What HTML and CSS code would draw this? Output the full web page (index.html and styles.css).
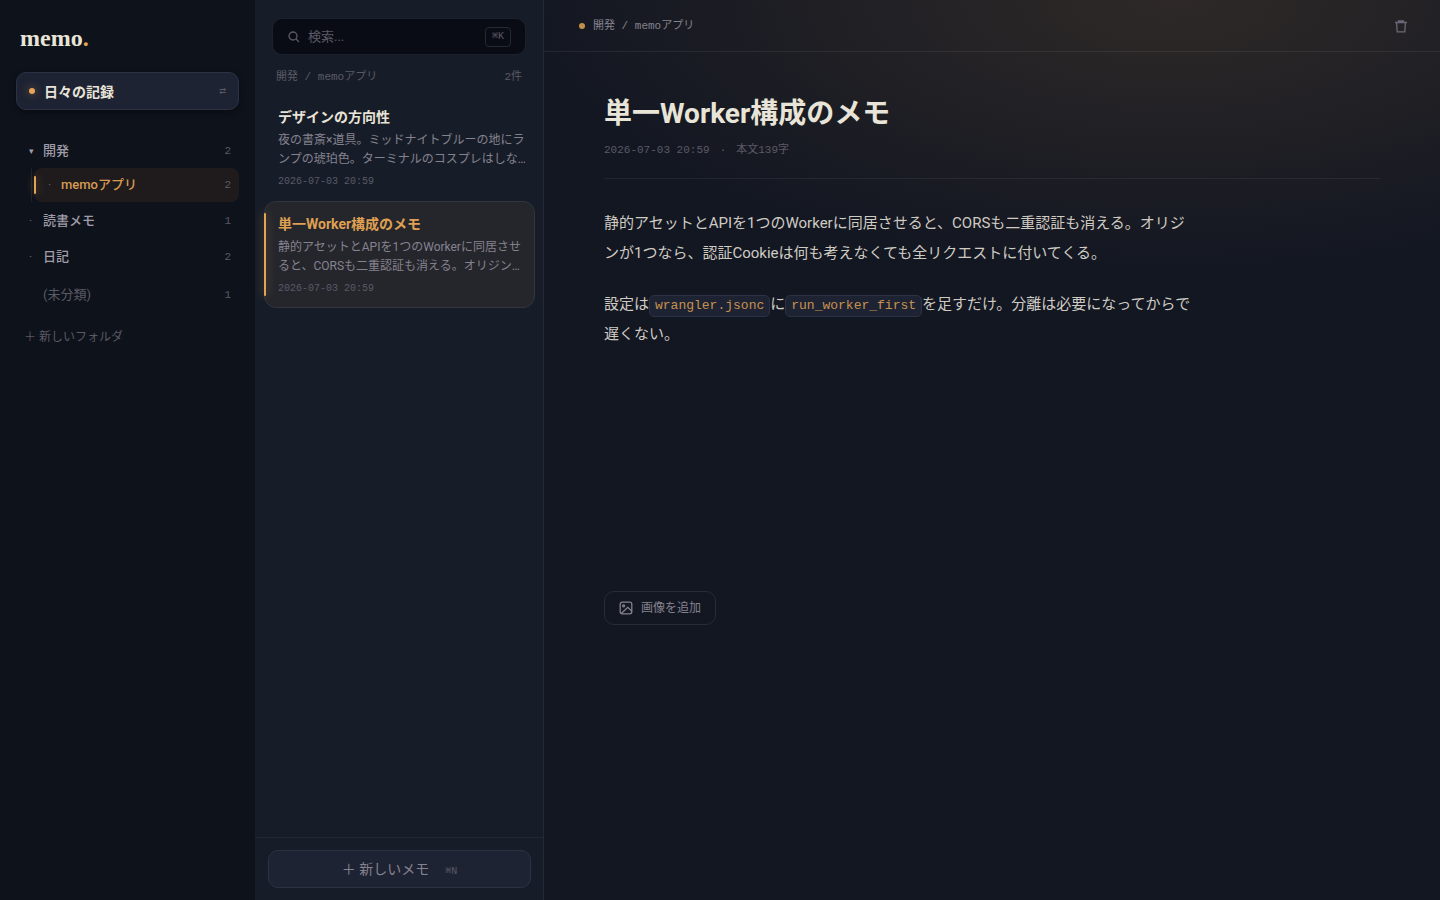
FILE: index.html
```html
<!DOCTYPE html>
<html lang="ja">
<head>
  <meta charset="UTF-8">
  <title>memo.</title>
  <meta name="viewport" content="width=device-width,initial-scale=1">
  <link rel="stylesheet" href="styles.css">
</head>
<body>
<div class="app">
  <nav class="side">
    <div class="logo">memo<span>.</span></div>
    <button class="space"><i class="lamp"></i><span class="name">日々の記録</span><span class="swap">⇄</span></button>
    <ul class="tree">
      <li><button class="folder"><span class="mark caret">▾</span><span class="name">開発</span><span class="num">2</span></button>
        <ul class="sub">
          <li><button class="folder active"><span class="mark">·</span><span class="name">memoアプリ</span><span class="num">2</span></button></li>
        </ul>
      </li>
      <li><button class="folder"><span class="mark">·</span><span class="name">読書メモ</span><span class="num">1</span></button></li>
      <li><button class="folder"><span class="mark">·</span><span class="name">日記</span><span class="num">2</span></button></li>
      <li><button class="folder none"><span class="mark"></span><span class="name">(未分類)</span><span class="num">1</span></button></li>
    </ul>
    <button class="new-folder">＋ 新しいフォルダ</button>
  </nav>

  <section class="list">
    <label class="search">
      <svg width="12" height="12" viewBox="0 0 12 12"><circle cx="5" cy="5" r="4"/><path d="M8 8l3 3"/></svg>
      <input type="text" placeholder="検索..." aria-label="検索">
      <kbd>⌘K</kbd>
    </label>
    <div class="list-head"><span>開発 / memoアプリ</span><span>2件</span></div>
    <div class="cards">
      <button class="card">
        <span class="card-title">デザインの方向性</span>
        <span class="excerpt">夜の書斎×道具。ミッドナイトブルーの地にランプの琥珀色。ターミナルのコスプレはしな…</span>
        <span class="date">2026-07-03 20:59</span>
      </button>
      <button class="card active">
        <span class="card-title">単一Worker構成のメモ</span>
        <span class="excerpt">静的アセットとAPIを1つのWorkerに同居させると、CORSも二重認証も消える。オリジン…</span>
        <span class="date">2026-07-03 20:59</span>
      </button>
    </div>
    <div class="list-foot">
      <button class="new-memo">＋ 新しいメモ<span>⌘N</span></button>
    </div>
  </section>

  <main class="editor">
    <header class="bar">
      <i class="lamp"></i><span class="crumb">開発 / memoアプリ</span>
      <button class="trash" aria-label="削除">
        <svg width="14" height="14" viewBox="0 0 14 14"><path d="M1 3.5h12M4.5 3.2V2h5v1.2M2.6 3.5l.6 9.3h7.6l.6-9.3"/></svg>
      </button>
    </header>
    <article class="doc">
      <h1>単一Worker構成のメモ</h1>
      <div class="meta"><span>2026-07-03 20:59</span><span>·</span><span>本文139字</span></div>
      <div class="body">
        <p>静的アセットとAPIを1つのWorkerに同居させると、CORSも二重認証も消える。オリジンが1つなら、認証Cookieは何も考えなくても全リクエストに付いてくる。</p>
        <p>設定は<code>wrangler.jsonc</code>に<code>run_worker_first</code>を足すだけ。分離は必要になってからで遅くない。</p>
      </div>
      <button class="add-image">
        <svg width="14" height="14" viewBox="0 0 14 14"><rect x="1.2" y="1.2" width="11.6" height="11.6" rx="2"/><circle cx="4.6" cy="4.8" r="1"/><path d="M2.5 12.3l6.3-6 4 4"/></svg>
        画像を追加
      </button>
    </article>
  </main>
</div>
</body>
</html>
```
FILE: styles.css
```css
:root{
  --sans:Roboto,"Noto Sans CJK JP",sans-serif;
  --mono:"Liberation Mono","DejaVu Sans Mono","Noto Sans CJK JP",monospace;
  --amber:#e5a455;
  --text:#e9e4d8;
  --mute:#a09daa;
  --dim:#5b5966;
}
*{box-sizing:border-box;}
body{margin:0;background:#131722;color:var(--text);font-family:var(--sans);}
button{font:inherit;color:inherit;background:none;border:0;padding:0;text-align:left;cursor:pointer;}
ul{list-style:none;margin:0;padding:0;}
svg{fill:none;stroke:currentColor;stroke-width:1.3;flex:none;}
.app{display:grid;grid-template-columns:255px 289px 1fr;min-height:100vh;}
.lamp{width:6px;height:6px;border-radius:50%;background:var(--amber);flex:none;}

/* sidebar */
.side{background:#0e121b;padding:23px 16px;}
.logo{font:bold 24px/30px "Liberation Serif",serif;padding-left:4px;}
.logo span{color:var(--amber);}
.space{display:flex;align-items:center;gap:9px;width:100%;height:38px;margin:19px 0 24px;padding:0 12px;background:#1e2333;border:1px solid #2c3243;border-radius:10px;box-shadow:0 2px 6px #0006;font-size:14px;font-weight:bold;}
.space .lamp{box-shadow:0 0 8px #e5a45588;}
.name{flex:1;}
.swap{font:11px/14px "DejaVu Sans Mono",monospace;color:var(--dim);}
.folder{display:flex;align-items:center;width:100%;height:34px;margin-bottom:2px;padding:0 8px 0 13px;border-radius:8px;font-size:13px;line-height:18px;font-weight:500;color:var(--mute);}
.mark{width:14px;color:var(--dim);font-size:11px;}
.caret{color:var(--mute);font-size:9px;}
.num{font:11px/14px var(--mono);color:var(--dim);}
.sub{margin:-2px 0 2px 15px;border-left:1px solid #1e222b;padding-left:2px;}
.sub .folder{margin:0;padding-left:14px;}
.sub .mark{width:13px;}
.folder.active{background:#1f1b1d;color:#d69a52;position:relative;}
.folder.active::before,.card.active::before{content:"";position:absolute;left:0;width:2px;background:var(--amber);box-shadow:0 0 8px #e5a45577;border-radius:1px;}
.folder.active::before{top:8px;bottom:8px;}
.folder.none{margin-top:4px;font-weight:normal;color:var(--dim);}
.new-folder{margin:11px 0 0 8px;font-size:12px;line-height:24px;color:var(--dim);}

/* memo list */
.list{display:flex;flex-direction:column;background:#171d28;border-right:1px solid #242934;}
.search{display:flex;align-items:center;gap:8px;height:37px;margin:18px 17px 0;padding:0 14px 0 15px;background:#090c14;border:1px solid #1d212b;border-radius:10px;color:var(--dim);}
.search input{flex:1;min-width:0;border:0;outline:0;background:none;padding:0;color:var(--text);font:13px/20px var(--sans);}
.search input::placeholder{color:var(--dim);}
kbd{font:10px/16px var(--mono);padding:1px 6px;border:1px solid #242934;border-radius:4px;}
.list-head{display:flex;justify-content:space-between;margin:13px 21px 8px;font:11px/18px var(--mono);color:var(--dim);}
.cards{flex:1;padding:0 8px 0 9px;}
.card{display:block;width:100%;position:relative;padding:12px 8px 11px 13px;border:1px solid transparent;border-radius:12px;}
.card.active{background:#25262c;border-color:#34353c;}
.card.active::before{left:-1px;top:11px;bottom:11px;}
.card.active .card-title{color:#dfa053;}
.card-title{display:block;font-size:14px;line-height:20px;font-weight:bold;}
.excerpt{display:block;margin:4px 0 6px;font-size:12px;line-height:19px;color:#85828f;}
.date{display:block;font:10px/14px var(--mono);color:var(--dim);}
.list-foot{padding:12px 12px 12px 13px;border-top:1px solid #222732;}
.new-memo{width:100%;height:38px;background:#1e2333;border:1px solid #2c3243;border-radius:10px;text-align:center;font-size:14px;line-height:20px;color:#85828f;}
.new-memo span{margin-left:16px;font:10px/14px var(--mono);color:var(--dim);}

/* editor */
.editor{background:radial-gradient(ellipse 640px 270px at 70% 0,#2e2927,#131722);}
.bar{display:flex;align-items:center;gap:8px;height:52px;padding:0 32px 0 35px;border-bottom:1px solid #ffffff12;}
.bar .lamp{background:#c48d4c;}
.crumb{flex:1;font:11px/18px var(--mono);color:#85828f;}
.trash{display:flex;color:#6a6877;}
.doc{padding:41px 60px;}
h1{margin:0;font-size:28px;line-height:42px;}
.meta{display:flex;gap:10px;padding:6px 0 19px;border-bottom:1px solid #ffffff10;font:11px/18px var(--mono);color:var(--dim);}
.body{max-width:592px;min-height:383px;padding-top:29px;font-size:15px;line-height:30px;color:#cfcbc2;}
p{margin:0 0 21px;}
code{display:inline-block;font:13px/18px var(--mono);color:#c8924f;background:#1e2333;border:1px solid #2c3243;border-radius:5px;padding:1px 5px;}
.add-image{display:flex;align-items:center;gap:8px;height:34px;margin-top:29px;padding:0 14px;border:1px solid #272b36;border-radius:10px;font-size:12px;line-height:18px;color:#85828f;}
```
